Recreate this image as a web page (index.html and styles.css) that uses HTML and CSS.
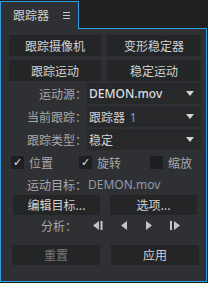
FILE: index.html
```html
<!DOCTYPE html>
<html>
<head>
<meta charset="utf-8">
<link rel="stylesheet" href="styles.css">
</head>
<body>
<div class="frame">
  <div class="tabs">
    <div class="tab"><span class="tab-title">跟踪器</span><svg class="tab-menu" width="7" height="7" viewBox="0 0 7 7"><rect x="0" y="0" width="7" height="1" fill="#c8c8c8"/><rect x="0" y="3" width="7" height="1" fill="#c8c8c8"/><rect x="0" y="6" width="7" height="1" fill="#c8c8c8"/></svg></div>
    <div class="tab-fill"></div>
  </div>
  <div class="panel">
    <div class="btn-row">
      <div class="btn">跟踪摄像机</div>
      <div class="btn">变形稳定器</div>
    </div>
    <div class="btn-row r2">
      <div class="btn">跟踪运动</div>
      <div class="btn">稳定运动</div>
    </div>
    <div class="field">
      <div class="label">运动源：</div>
      <div class="select bold"><span>DEMON.mov</span><svg class="arrow" width="8" height="5" viewBox="0 0 8 5"><path d="M0 0H8L4 5Z" fill="#d4d4d4"/></svg></div>
    </div>
    <div class="field">
      <div class="label">当前跟踪：</div>
      <div class="select"><span>跟踪器 <span class="num">1</span></span><svg class="arrow" width="8" height="5" viewBox="0 0 8 5"><path d="M0 0H8L4 5Z" fill="#d4d4d4"/></svg></div>
    </div>
    <div class="field">
      <div class="label">跟踪类型：</div>
      <div class="select"><span>稳定</span><svg class="arrow" width="8" height="5" viewBox="0 0 8 5"><path d="M0 0H8L4 5Z" fill="#d4d4d4"/></svg></div>
    </div>
    <div class="checks">
      <div class="check c1"><span class="box">✓</span>位置</div>
      <div class="check c2"><span class="box">✓</span>旋转</div>
      <div class="check c3"><span class="box"></span>缩放</div>
    </div>
    <div class="field target">
      <div class="label">运动目标：</div>
      <div class="target-val">DEMON.mov</div>
    </div>
    <div class="btn-row r3">
      <div class="btn">编辑目标...</div>
      <div class="btn">选项...</div>
    </div>
    <div class="analyze">
      <div class="label">分析：</div>
      <div class="icons">
        <svg width="10" height="9" viewBox="0 0 10 9"><path d="M0 4.5L6 0V9Z" fill="#c4c4c4"/><rect x="7.5" y="0" width="2" height="9" fill="#c4c4c4"/></svg>
        <svg width="8" height="9" viewBox="0 0 8 9"><path d="M1 4.5L7 0V9Z" fill="#c4c4c4"/></svg>
        <svg width="8" height="9" viewBox="0 0 8 9"><path d="M7 4.5L1 0V9Z" fill="#c4c4c4"/></svg>
        <svg width="10" height="9" viewBox="0 0 10 9"><rect x="0" y="0" width="2" height="9" fill="#c4c4c4"/><path d="M10 4.5L4 0V9Z" fill="#c4c4c4"/></svg>
      </div>
    </div>
    <div class="btn-row r4">
      <div class="btn disabled">重置</div>
      <div class="btn">应用</div>
    </div>
  </div>
</div>
</body>
</html>
```
FILE: styles.css
```css
html, body {
  margin: 0;
  padding: 0;
}
body {
  background: #1f2021;
  width: 208px;
  height: 283px;
  overflow: hidden;
  font-family: "Noto Sans CJK SC", "Noto Sans", sans-serif;
  font-size: 12px;
  color: #c8c8c8;
}
.frame {
  padding-top: 1px;
  width: 207px;
  height: 281px;
  display: flex;
  flex-direction: column;
}
.tabs {
  display: flex;
  height: 28px;
  flex: none;
}
.tab {
  border: 1px solid #2f9fe0;
  border-bottom: none;
  background: #2f3033;
  display: flex;
  align-items: center;
  padding-bottom: 2px;
  box-sizing: border-box;
  width: 79px;
}
.tab-title {
  margin-left: 12px;
  color: #d0d0d0;
  line-height: 14px;
}
.tab-menu {
  margin-left: 14px;
  margin-top: 1px;
}
.tab-fill {
  flex: 1;
  border-bottom: 1px solid #2f9fe0;
}
.panel {
  flex: 1;
  background: #2f3033;
  border: 1px solid #2f9fe0;
  border-top: none;
  display: flex;
  flex-direction: column;
  padding: 6px 4px 0 8px;
}
.btn-row {
  display: grid;
  grid-template-columns: 92px 94px;
  column-gap: 6px;
  height: 21px;
}
.btn-row.r2 {
  margin-top: 4px;
}
.btn {
  background: #242526;
  display: flex;
  align-items: center;
  justify-content: center;
  color: #d2d2d2;
  line-height: 14px;
}
.btn.disabled {
  color: #7a7a7a;
}
.field {
  display: flex;
  align-items: center;
  height: 21px;
  margin-top: 2px;
}
.field:first-of-type {
  margin-top: 4px;
}
.label {
  width: 78px;
  text-align: right;
  color: #a8a8a8;
  white-space: nowrap;
}
.select {
  width: 114px;
  height: 100%;
  box-sizing: border-box;
  background: #27282a;
  display: flex;
  align-items: center;
  justify-content: space-between;
  padding: 0 7px 0 2px;
  color: #d2d2d2;
}
.select.bold {
  font-family: "Noto Sans", sans-serif;
  font-weight: 500;
  font-size: 12px;
  color: #dcdcdc;
}
.num {
  color: #5fa6e0;
  font-family: "Noto Sans", sans-serif;
  margin-left: 2px;
}
.checks {
  display: flex;
  align-items: center;
  height: 16px;
  margin-top: 4px;
}
.check {
  display: flex;
  align-items: center;
  color: #a8a8a8;
}
.box {
  width: 13px;
  height: 13px;
  background: #1e1f20;
  margin-right: 5px;
  display: flex;
  align-items: center;
  justify-content: center;
  color: #e0e0e0;
  font-family: "DejaVu Sans", sans-serif;
  font-size: 11px;
  font-weight: bold;
}
.c1 { margin-left: 2px; }
.c2 { margin-left: 26px; }
.c3 { margin-left: 29px; }
.field.target {
  height: 16px;
  margin-top: 6px;
}
.target-val {
  font-family: "Noto Sans", sans-serif;
  color: #8f9aa8;
  margin-left: 1px;
}
.btn-row.r3 {
  margin-top: 3px;
  grid-template-columns: 87px 87px;
  column-gap: 10px;
  padding-left: 4px;
  height: 20px;
}
.analyze {
  display: flex;
  align-items: center;
  height: 20px;
}
.analyze .label {
  width: 68px;
}
.icons {
  display: flex;
  align-items: center;
  margin-left: 16px;
  gap: 17px;
}
.btn-row.r4 {
  margin-top: 10px;
  grid-template-columns: 88px 88px;
  column-gap: 11px;
  padding-left: 3px;
  height: 20px;
}
```
